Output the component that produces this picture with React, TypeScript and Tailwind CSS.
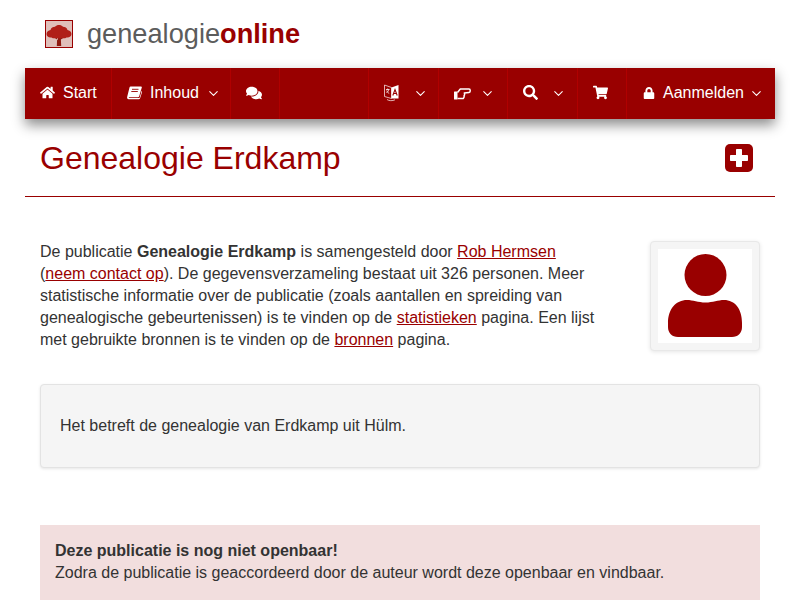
import { ChevronDown } from 'lucide-react';
import {
  FaComments,
  FaHome,
  FaLock,
  FaSearch,
  FaShoppingCart,
} from 'react-icons/fa';
import type { ReactNode } from 'react';

function NavItem({ width, icon, label, chevron, gap, last }: { width: string; icon?: ReactNode; label?: string; chevron?: boolean; gap?: string; last?: boolean }) {
  return (
    <div className={`${width} h-full flex items-center pl-[15px] pb-0.5 text-white text-[16px] ${last ? '' : 'border-r border-[#b00000]'}`}>
      {icon}
      {label && <span className="ml-2">{label}</span>}
      {chevron && <ChevronDown size={15} strokeWidth={1.7} className={`${gap} mt-0.5`} />}
    </div>
  );
}

function BookIcon() {
  return (
    <svg width="15" height="14" viewBox="0 0 15 14" fill="white">
      <path d="M3.600 0.500h10.400c.7 0 1 .5.8 1.100l-2.600 8.700c-.2.6-.6.9-1.200.9H2.300c-.6 0-.9.9 0 .9h9.600c.4 0 .6-.1.8-.5l2-6.800.6.4-2.300 7.200c-.2.5-.5.8-1.100.8H2.200C.9 13.700-.3 12.500.2 10.800L2.500 1.600c.2-.7.5-1.100 1.100-1.100z" />
      <path d="M5 3.300h6.500M4.300 5.500h6.500" stroke="#990000" strokeWidth="0.9" />
    </svg>
  );
}

function LanguageIcon() {
  return (
    <svg width="15" height="18" viewBox="0 0 15 18">
      <path d="M0.500 1l7 2.500v11l-7-2z" fill="none" stroke="#f3dcdc" strokeWidth="0.800" />
      <path d="M7.500 3.500l7-2.500v13.500h-7z" fill="white" />
      <path d="M2 5.500h3.500M3.700 4.500v1M2.500 9c1-1 2-2 2.300-3.500M2.700 6.500c.6 1.500 1.500 2.400 2.500 3" fill="none" stroke="white" strokeWidth="0.800" />
      <path d="M8.800 11.500l2.200-6 2.200 6M9.600 9.500h2.800" fill="none" stroke="#990000" strokeWidth="1.100" />
      <path d="M3 15.500c2 1.500 5.500 1.500 8 .3" fill="none" stroke="#f3dcdc" strokeWidth="0.800" />
    </svg>
  );
}

function HandIcon() {
  return (
    <svg width="17" height="13" viewBox="0 0 17 13" className="mt-px">
      <rect x="0" y="4.500" width="3.500" height="8" rx="0.500" fill="white" />
      <path d="M3.500 5.500L6.300 2H15c1.600 0 1.700 3.300 0 3.500L10.300 6c.5 1 .3 2-.2 2.600.2 1-.2 2.100-.9 2.900H3.500" fill="none" stroke="white" strokeWidth="1.500" strokeLinejoin="round" />
    </svg>
  );
}

function TreeLogo() {
  return (
    <div className="w-7 h-7 border border-[#990000] bg-[#e0bfba] flex items-center justify-center">
      <svg width="26" height="26" viewBox="0 0 26 26">
        <path d="M11.300 15h3.400l.500 10h-4.400zM7 16l5 3v-3zM19 16l-5 3v-3z" fill="#8f1a10" />
        <path d="M0.500 13c0-2.500 2-3.500 4-4 .5-2 2.500-3.200 4.500-3.200C10 4.500 11.500 4 13 4s3 .5 4 1.800c2 0 4 1.200 4.500 3.200 2 .5 4 1.500 4 4 0 2.500-2.500 4-5 3.500-1.500 1-3 1-4.500.5-1.500.5-4.500.5-6 0-1.500.5-3 .5-4.500-.5-2.500.5-5-1-5-3.500z" fill="#b01f18" />
      </svg>
    </div>
  );
}

export default function App() {
  return (
    <div className="w-[800px] h-[600px] overflow-hidden bg-white text-[#333333] text-[16px] leading-[22px] font-['Liberation_Sans',Arial,sans-serif]">
      <header className="h-[68px] pl-[45px] flex items-center">
        <TreeLogo />
        <div className="ml-[14px] text-[27.2px] leading-none text-[#5c5c5c]">
          genealogie<span className="font-bold text-[#990000]">online</span>
        </div>
      </header>

      <nav className="mx-[25px] h-[51px] bg-[#990000] flex shadow-[0_6px_12px_rgba(0,0,0,0.45)]">
        <NavItem width="w-[87px]" icon={<FaHome size={15} />} label="Start" />
        <NavItem width="w-[119px]" icon={<BookIcon />} label="Inhoud" chevron gap="ml-[7px]" />
        <NavItem width="w-[49px]" icon={<FaComments size={16} />} />
        <NavItem width="w-[89px]" />
        <NavItem width="w-[70px]" icon={<LanguageIcon />} chevron gap="ml-[14px]" />
        <NavItem width="w-[69px]" icon={<HandIcon />} chevron gap="ml-[9px]" />
        <NavItem width="w-[70px]" icon={<FaSearch size={15} />} chevron gap="ml-[13px]" />
        <NavItem width="w-[49px]" icon={<FaShoppingCart size={15} />} />
        <NavItem width="flex-1" icon={<FaLock size={12} className="ml-px" />} label="Aanmelden" chevron gap="ml-[5px]" last />
      </nav>

      <div className="mx-[25px] h-[78px] border-b border-[#990000] flex items-center justify-between pl-[15px] pr-[22px]">
        <h1 className="text-[32px] leading-none text-[#990000] mt-[1px]">Genealogie Erdkamp</h1>
        <div className="w-7 h-7 rounded-[5px] bg-[#990000] flex items-center justify-center mt-px">
          <svg width="20" height="20" viewBox="0 0 20 20" fill="white">
            <path d="M8 1h4c.6 0 1 .4 1 1v5h5c.6 0 1 .4 1 1v4c0 .6-.4 1-1 1h-5v5c0 .6-.4 1-1 1H8c-.6 0-1-.4-1-1v-5H2c-.6 0-1-.4-1-1V8c0-.6.4-1 1-1h5V2c0-.6.4-1 1-1z" />
          </svg>
        </div>
      </div>

      <main className="px-10 pt-[44px]">
        <section className="flex justify-between">
          <p className="w-[560px]">
            De publicatie <strong>Genealogie Erdkamp</strong> is samengesteld door <a className="text-[#990000] underline">Rob Hermsen</a>{' '}
            (<a className="text-[#990000] underline">neem contact op</a>). De gegevensverzameling bestaat uit 326 personen. Meer statistische informatie over de publicatie (zoals aantallen en spreiding van genealogische gebeurtenissen) is te vinden op de <a className="text-[#990000] underline">statistieken</a> pagina. Een lijst met gebruikte bronnen is te vinden op de <a className="text-[#990000] underline">bronnen</a> pagina.
          </p>
          <div className="w-[110px] h-[110px] p-[7px] bg-[#f5f5f5] border border-[#e8e8e8] rounded shadow-[0_1px_4px_rgba(0,0,0,0.1)]">
            <div className="w-full h-full bg-white flex items-center justify-center">
              <svg width="94" height="94" viewBox="0 0 94 94" fill="#990000">
                <circle cx="47.500" cy="26" r="21" />
                <path d="M10 74c0-14 8-23 19-23 6 0 11 2.500 18.500 2.500S60 51 66 51c11 0 18 9 18 23v4c0 6-4 10-10 10H20c-6 0-10-4-10-10z" />
              </svg>
            </div>
          </div>
        </section>

        <section className="mt-[33px] h-[84px] bg-[#f5f5f5] border border-[#e3e3e3] rounded shadow-[0_1px_3px_rgba(0,0,0,0.1)] flex items-center px-[19px]">
          Het betreft de genealogie van Erdkamp uit Hülm.
        </section>

        <section className="mt-[57px] bg-[#f2dede] px-[15px] pt-[15px] pb-[20px]">
          <strong>Deze publicatie is nog niet openbaar!</strong>
          <br />
          Zodra de publicatie is geaccordeerd door de auteur wordt deze openbaar en vindbaar.
        </section>
      </main>
    </div>
  );
}
